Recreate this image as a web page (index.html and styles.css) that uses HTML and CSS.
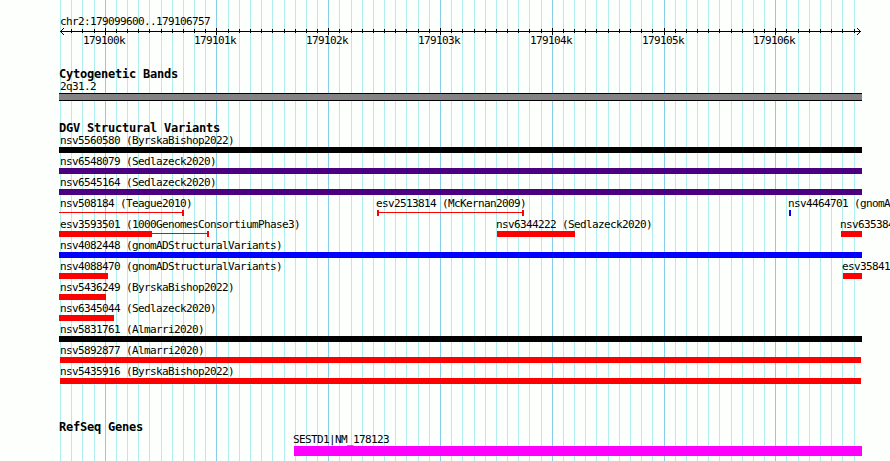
FILE: index.html
```
<!DOCTYPE html>
<html lang="en">
<head>
  <meta charset="UTF-8">
  <title>chr2:179099600..179106757</title>
  <link rel="stylesheet" href="styles.css">
</head>
<body>
  <div class="browser">
    <svg class="gridlines" id="gridlines" width="890" height="461"></svg>

    <div class="region">chr2:179099600..179106757</div>
    <svg class="ruler" id="ruler" width="890" height="20"></svg>

    <section class="track cyto">
      <h2>Cytogenetic Bands</h2>
      <div class="row">
        <div class="feature" style="--x: 59; --w: 803"><span>2q31.2</span><div class="band"></div></div>
      </div>
    </section>

    <section class="track variants">
      <h2>DGV Structural Variants</h2>
      <div id="variants"></div>
    </section>

    <section class="track genes">
      <h2>RefSeq Genes</h2>
      <div class="row">
        <div class="feature inner" style="--x: 294; --w: 568"><span>SESTD1|NM_178123</span><div class="bar gene"></div></div>
      </div>
    </section>
  </div>

  <script>
    const step = 11.176;
    const tickX = i => Math.round(60.02 + step * i);

    // one list per row: [name, type, x, width, width of the thick part]
    const rows = [
      [["nsv5560580 (ByrskaBishop2022)", "complex", 59, 803]],
      [["nsv6548079 (Sedlazeck2020)", "inversion", 59, 803]],
      [["nsv6545164 (Sedlazeck2020)", "inversion", 59, 803]],
      [
        ["nsv508184 (Teague2010)", "range", 59, 125],
        ["esv2513814 (McKernan2009)", "range both", 377, 147],
        ["nsv4464701 (gnomA", "gain", 789, 2]
      ],
      [
        ["esv3593501 (1000GenomesConsortiumPhase3)", "range", 59, 150, 93],
        ["nsv6344222 (Sedlazeck2020)", "loss", 497, 78],
        ["nsv635384", "loss", 841, 21]
      ],
      [["nsv4082448 (gnomADStructuralVariants)", "gain", 59, 803]],
      [
        ["nsv4088470 (gnomADStructuralVariants)", "loss", 59, 49],
        ["esv35841", "loss", 843, 19]
      ],
      [["nsv5436249 (ByrskaBishop2022)", "loss", 59, 47]],
      [["nsv6345044 (Sedlazeck2020)", "loss", 59, 55]],
      [["nsv5831761 (Almarri2020)", "complex", 59, 803]],
      [["nsv5892877 (Almarri2020)", "loss", 60, 801]],
      [["nsv5435916 (ByrskaBishop2022)", "loss", 60, 801]]
    ];

    function drawGrid() {
      let lines = '';
      let ticks = '<rect x="60" y="3" width="801" height="1"/>';
      // arrow heads
      for (let n = 1; n <= 3; n++) {
        for (const y of [3 - n, 3 + n]) {
          ticks += `<rect x="${60 + n}" y="${y}" width="1" height="1"/>`;
          ticks += `<rect x="${860 - n}" y="${y}" width="1" height="1"/>`;
        }
      }
      for (let i = 0; i <= 71; i++) {
        const x = tickX(i);
        const major = i % 10 === 4;
        lines += `<rect class="${major ? 'major' : 'minor'}" x="${x}" y="0" width="1" height="461"/>`;
        if (i > 0) {
          ticks += `<rect x="${x}" y="${major ? 0 : 1}" width="1" height="${major ? 7 : 4}"/>`;
        }
        if (major) {
          ticks += `<text x="${x - 22}" y="16">${179100 + (i - 4) / 10}k</text>`;
        }
      }
      document.getElementById("gridlines").innerHTML = lines;
      document.getElementById("ruler").innerHTML = ticks;
    }

    function drawVariants() {
      document.getElementById("variants").innerHTML = rows.map(row => `
        <div class="row">
          ${row.map(([name, type, x, w, thick]) => `
            <div class="feature ${x > 60 ? 'inner' : x === 60 ? 'inset' : ''}" style="--x: ${x}; --w: ${w}">
              <span>${name}</span>
              <div class="bar ${type}">${thick ? `<i style="--w: ${thick}"></i>` : ''}</div>
            </div>`).join('')}
        </div>`).join('');
    }

    drawGrid();
    drawVariants();
  </script>
</body>
</html>
```

FILE: styles.css
```
body {
  margin: 0;
  background-color: #fdfffc;
  color: #000;
  font-family: "DejaVu Sans Mono", monospace;
  font-size: 11px;
  letter-spacing: -0.62px;
  line-height: 13px;
}
.browser {
  position: relative;
  width: 890px;
  height: 461px;
  padding-top: 15px;
  box-sizing: border-box;
  overflow: hidden;
}
.gridlines {
  position: absolute;
  top: 0;
  left: 0;
  z-index: -1;
}
.minor {
  fill: #afeeee;
}
.major {
  fill: #87ceeb;
}
.region {
  padding-left: 60px;
}
.ruler {
  display: block;
  shape-rendering: crispEdges;
}
h2 {
  margin: 0;
  padding-left: 59px;
  font-size: 12px;
  line-height: 12px;
  letter-spacing: -0.22px;
}
.cyto {
  margin-top: 20px;
}
.variants {
  margin-top: 21px;
}
.genes {
  margin-top: 35px;
}
.row {
  display: grid;
}
.variants .row {
  height: 21px;
}
.feature {
  grid-area: 1 / 1;
  margin-left: calc(var(--x) * 1px);
  width: calc(var(--w) * 1px);
  white-space: nowrap;
}
.feature span {
  display: block;
  margin-left: 1px;
}
.feature.inner span {
  margin-left: -1px;
}
.feature.inset span {
  margin-left: 0;
}
.band {
  height: 6px;
  border-top: 1px solid #000;
  border-bottom: 1px solid #000;
  background-color: #848284;
}
.bar {
  height: 6px;
}
.complex {
  background-color: #000;
}
.inversion {
  background-color: #4b0082;
}
.gain {
  background-color: #00f;
}
.loss {
  background-color: #f00;
}
.gene {
  height: 10px;
  background-color: #f0f;
}
/* thin line with end caps */
.range {
  box-sizing: border-box;
  border-right: 2px solid #f00;
  background: linear-gradient(#f00, #f00) 0 2px / 100% 1px no-repeat;
}
.range.both {
  border-left: 2px solid #f00;
}
.range i {
  display: block;
  width: calc(var(--w) * 1px);
  height: 6px;
  background-color: #f00;
}
```
